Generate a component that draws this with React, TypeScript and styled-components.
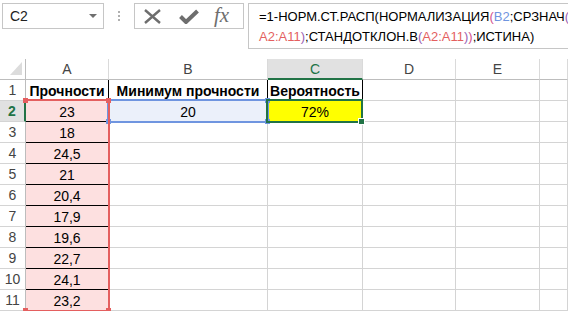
import { Fragment } from 'react'
import styled, { createGlobalStyle } from 'styled-components'

const GlobalStyle = createGlobalStyle`
  html, body { margin: 0; background: #fff; overflow: hidden; }
  body { font-family: "Liberation Sans", Arial, sans-serif; }
`

const Toolbar = styled.div`
  display: flex;
  align-items: flex-start;
  height: 59px;
  padding: 3px 0 0 2px;
  box-sizing: border-box;
  overflow: hidden;
`
const NameBox = styled.div`
  width: 102px;
  height: 26px;
  flex: none;
  box-sizing: border-box;
  border: 1px solid #c6c6c6;
  display: flex;
  align-items: center;
  justify-content: space-between;
  padding: 0 6px 0 7px;
  font-size: 14px;
  color: #222;
`
const Caret = styled.div`
  width: 0;
  height: 0;
  border-left: 4px solid transparent;
  border-right: 4px solid transparent;
  border-top: 4px solid #6f6f6f;
`
const Dots = styled.div`
  width: 30px;
  height: 26px;
  flex: none;
  display: flex;
  flex-direction: column;
  align-items: center;
  justify-content: center;
  gap: 2px;
  & > span {
    width: 2px;
    height: 2px;
    background: #b0b0b0;
  }
`
const ButtonBox = styled.div`
  width: 110px;
  height: 26px;
  flex: none;
  box-sizing: border-box;
  border: 1px solid #c6c6c6;
  display: flex;
  align-items: center;
  padding: 0 0 0 8px;
  gap: 17px;
  color: #6e6e6e;
`
const Fx = styled.span`
  font-family: "Liberation Serif", "DejaVu Serif", serif;
  font-style: italic;
  font-size: 21px;
  line-height: 1;
  color: #6e6e6e;
  margin-left: -2px;
  margin-top: -1px;
`
const FormulaBox = styled.div`
  flex: none;
  width: 340px;
  height: 46px;
  margin-left: 4px;
  box-sizing: border-box;
  border: 1px solid #c6c6c6;
  padding: 3px 0 0 10px;
  font-size: 13px;
  line-height: 20px;
  color: #000;
  white-space: nowrap;
`
const Ref = styled.span<{ $c: string }>`
  color: ${p => p.$c};
`

const Sheet = styled.div`
  display: grid;
  grid-template-columns: 26px 83px 159px 95px 93px 84px 1fr;
  grid-auto-rows: 21px;
  width: 568px;
`
const Corner = styled.div`
  position: relative;
  box-sizing: border-box;
  border-right: 1px solid #bdbdbd;
  border-bottom: 1px solid #bdbdbd;
  &::after {
    content: '';
    position: absolute;
    right: 3px;
    bottom: 4px;
    width: 12px;
    height: 13px;
    background: #dcdcdc;
    clip-path: polygon(100% 0, 100% 100%, 0 100%);
  }
`
const ColHead = styled.div<{ $active?: boolean }>`
  box-sizing: border-box;
  border-right: 1px solid #dadada;
  border-bottom: ${p => (p.$active ? '2px solid #217346' : '1px solid #bdbdbd')};
  background: ${p => (p.$active ? '#e1e1e1' : '#fff')};
  color: ${p => (p.$active ? '#217346' : '#444')};
  display: flex;
  align-items: center;
  justify-content: center;
  font-size: 14px;
  padding-top: ${p => (p.$active ? '1px' : '0')};
`
const RowHead = styled.div<{ $active?: boolean }>`
  box-sizing: border-box;
  border-right: ${p => (p.$active ? '2px solid #217346' : '1px solid #bdbdbd')};
  border-bottom: 1px solid #d4d4d4;
  background: ${p => (p.$active ? '#e1e1e1' : '#fff')};
  color: ${p => (p.$active ? '#217346' : '#444')};
  font-weight: ${p => (p.$active ? 700 : 400)};
  display: flex;
  align-items: center;
  justify-content: center;
  font-size: 14px;
`
const Cell = styled.div<{ $fill?: string; $bold?: boolean; $rb?: boolean; $bb?: boolean }>`
  position: relative;
  box-sizing: border-box;
  border-right: 1px solid ${p => (p.$rb ? '#000' : '#d4d4d4')};
  border-bottom: 1px solid ${p => (p.$bb ? '#000' : '#d4d4d4')};
  background: ${p => p.$fill ?? '#fff'};
  display: flex;
  align-items: center;
  justify-content: center;
  font-size: 14px;
  font-weight: ${p => (p.$bold ? 700 : 400)};
  color: #000;
  white-space: nowrap;
  padding-top: 1px;
`
const Range = styled.div<{ $color: string; $left?: boolean; $z: number }>`
  position: absolute;
  box-sizing: border-box;
  border: 2px solid ${p => p.$color};
  border-left-width: ${p => (p.$left === false ? 0 : 2)}px;
  z-index: ${p => p.$z};
  pointer-events: none;
`
const Handle = styled.div<{ $color: string; $v: 'top' | 'bottom'; $h: 'left' | 'right'; $ring?: boolean }>`
  position: absolute;
  width: 5px;
  height: 5px;
  background: ${p => p.$color};
  ${p => p.$v}: -3px;
  ${p => p.$h}: -3px;
  outline: ${p => (p.$ring ? '1px solid #fff' : 'none')};
`

const PINK = '#fde0e0'
const RED = '#e45f5f'
const BLUE = '#6f95e0'
const GREEN = '#217346'
const L2 = '#d2528e'
const L3 = '#9a5fb4'

const columnA = ['18', '24,5', '21', '20,4', '17,9', '19,6', '22,7', '24,1', '23,2']

function Corners({ color, ring }: { color: string; ring?: boolean }) {
  return (
    <>
      <Handle $color={color} $v="top" $h="left" $ring={ring} />
      <Handle $color={color} $v="top" $h="right" $ring={ring} />
      <Handle $color={color} $v="bottom" $h="left" $ring={ring} />
      <Handle $color={color} $v="bottom" $h="right" $ring={ring} />
    </>
  )
}

function EmptyCells() {
  return (
    <>
      <Cell />
      <Cell />
      <Cell />
    </>
  )
}

export default function App() {
  return (
    <>
      <GlobalStyle />
      <Toolbar>
        <NameBox>
          C2
          <Caret />
        </NameBox>
        <Dots>
          <span />
          <span />
          <span />
        </Dots>
        <ButtonBox>
          <svg width="19" height="15" viewBox="0 0 19 15">
            <path d="M2 1 L17 14 M17 1 L2 14" stroke="currentColor" strokeWidth="2.4" fill="none" />
          </svg>
          <svg width="20" height="15" viewBox="0 0 20 15">
            <path d="M1.5 7.5 L7 13 L18.5 2" stroke="currentColor" strokeWidth="4" fill="none" />
          </svg>
          <Fx>fx</Fx>
        </ButtonBox>
        <FormulaBox>
          =1-НОРМ.СТ.РАСП(НОРМАЛИЗАЦИЯ<Ref $c={L2}>(</Ref>
          <Ref $c={BLUE}>B2</Ref>;СРЗНАЧ<Ref $c={L3}>(</Ref>
          <br />
          <Ref $c={RED}>A2:A11</Ref>
          <Ref $c={L3}>)</Ref>;СТАНДОТКЛОН.В<Ref $c={L3}>(</Ref>
          <Ref $c={RED}>A2:A11</Ref>
          <Ref $c={L3}>)</Ref>
          <Ref $c={L2}>)</Ref>;ИСТИНА)
        </FormulaBox>
      </Toolbar>

      <Sheet>
        <Corner />
        <ColHead>A</ColHead>
        <ColHead>B</ColHead>
        <ColHead $active>C</ColHead>
        <ColHead>D</ColHead>
        <ColHead>E</ColHead>
        <ColHead />

        <RowHead>1</RowHead>
        <Cell $bold $rb>Прочности</Cell>
        <Cell $bold $rb>Минимум прочности</Cell>
        <Cell $bold $rb>Вероятность</Cell>
        <EmptyCells />

        <RowHead $active>2</RowHead>
        <Cell $fill={PINK} $bb>
          23
          <Range $color={RED} $left={false} $z={3} style={{ top: -2, left: 0, width: 84, height: 213 }}>
            <Corners color={RED} />
          </Range>
        </Cell>
        <Cell $fill="#ebf0fa">
          20
          <Range $color={BLUE} $z={2} style={{ top: -2, left: -2, width: 162, height: 24 }}>
            <Corners color={BLUE} />
          </Range>
        </Cell>
        <Cell $fill="#ffff00">
          72%
          <Range $color={GREEN} $z={4} style={{ top: -2, left: -2, width: 97, height: 24 }}>
            <Handle $color={GREEN} $v="bottom" $h="right" $ring />
          </Range>
        </Cell>
        <EmptyCells />

        {columnA.map((v, i) => (
          <Fragment key={i}>
            <RowHead>{i + 3}</RowHead>
            <Cell $fill={PINK} $bb={i < columnA.length - 1}>
              {v}
            </Cell>
            <Cell />
            <Cell />
            <EmptyCells />
          </Fragment>
        ))}
      </Sheet>
    </>
  )
}
